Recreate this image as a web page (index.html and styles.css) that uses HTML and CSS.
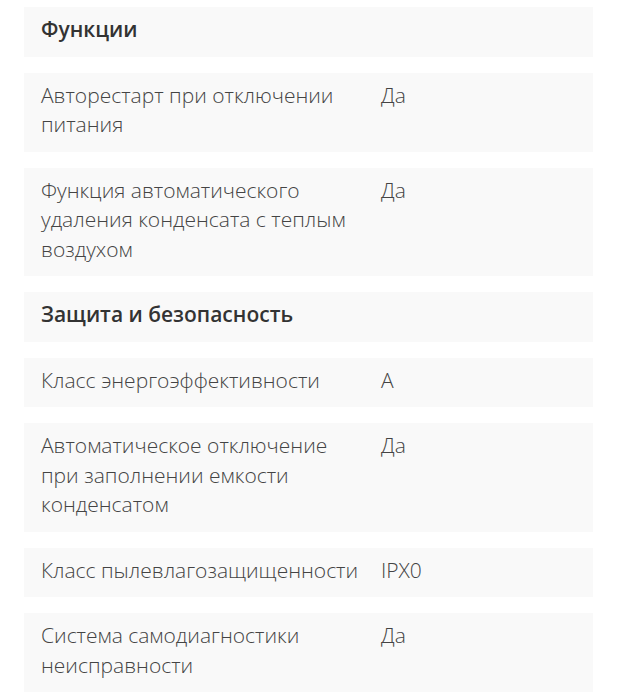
FILE: index.html
```html
<!DOCTYPE html>
<html lang="ru">
<head>
<meta charset="utf-8">
<link rel="stylesheet" href="styles.css">
</head>
<body>
<div class="specs">
  <div class="row head">Функции</div>
  <div class="row"><div class="label">Авторестарт при отключении питания</div><div class="value">Да</div></div>
  <div class="row"><div class="label">Функция автоматического удаления конденсата с теплым воздухом</div><div class="value">Да</div></div>
  <div class="row head">Защита и безопасность</div>
  <div class="row"><div class="label">Класс энергоэффективности</div><div class="value">A</div></div>
  <div class="row"><div class="label">Автоматическое отключение при заполнении емкости конденсатом</div><div class="value">Да</div></div>
  <div class="row"><div class="label">Класс пылевлагозащищенности</div><div class="value">IPX0</div></div>
  <div class="row"><div class="label">Система самодиагностики неисправности</div><div class="value">Да</div></div>
</div>
</body>
</html>
```
FILE: styles.css
```css
html, body { margin: 0; padding: 0; background: #fff; }
body {
  font-family: "Open Sans", "Noto Sans", sans-serif;
  font-size: 21px;
  font-weight: 300;
  color: #444;
}
.specs {
  display: flex;
  flex-direction: column;
  gap: 16px;
  padding: 7px 24px 0 24px;
}
.row {
  background: #f9f9f9;
  padding: 8px 17px 12px;
  line-height: 29.5px;
  display: grid;
  grid-template-columns: 320px 1fr;
  column-gap: 20px;
}
.row.head {
  display: block;
  font-size: 21px;
  font-weight: 600;
  color: #333;
}
```
